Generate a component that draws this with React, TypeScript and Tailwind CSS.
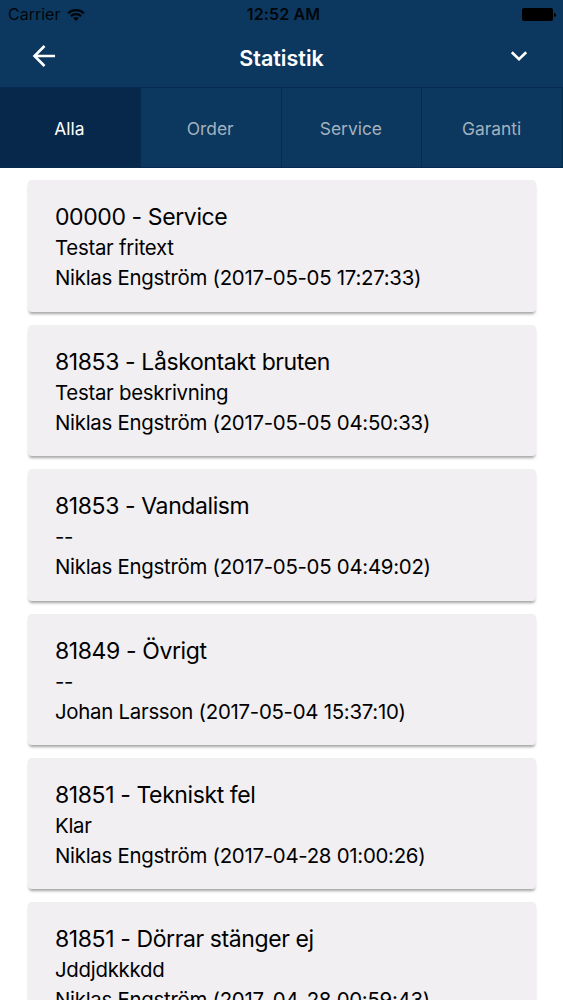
import { useState } from 'react';
import clsx from 'clsx';

interface Report {
  title: string;
  description: string;
  author: string;
}

const tabs = ['Alla', 'Order', 'Service', 'Garanti'];

const reports: Report[] = [
  { title: '00000 - Service', description: 'Testar fritext', author: 'Niklas Engström (2017-05-05 17:27:33)' },
  { title: '81853 - Låskontakt bruten', description: 'Testar beskrivning', author: 'Niklas Engström (2017-05-05 04:50:33)' },
  { title: '81853 - Vandalism', description: '--', author: 'Niklas Engström (2017-05-05 04:49:02)' },
  { title: '81849 - Övrigt', description: '--', author: 'Johan Larsson (2017-05-04 15:37:10)' },
  { title: '81851 - Tekniskt fel', description: 'Klar', author: 'Niklas Engström (2017-04-28 01:00:26)' },
  { title: '81851 - Dörrar stänger ej', description: 'Jddjdkkkdd', author: 'Niklas Engström (2017-04-28 00:59:43)' },
];

function StatusBar() {
  return (
    <div className="grid h-[29px] grid-cols-[1fr_auto_1fr] items-center pl-2 pr-[7px] text-[16px] leading-[29px] text-black/90">
      <div className="flex items-center gap-[7px]">
        <span>Carrier</span>
        <svg className="h-3 w-[18px]" viewBox="0 0 18 12" fill="none" aria-hidden="true">
          <path d="M1 4.3C5.6.1 12.4.1 17 4.3" stroke="currentColor" strokeWidth="2.2" />
          <path d="M3.8 7.1C6.8 4.5 11.2 4.5 14.2 7.1" stroke="currentColor" strokeWidth="2.2" />
          <path d="M9 12 6.2 9.1C7.8 7.7 10.2 7.7 11.8 9.1Z" fill="currentColor" />
        </svg>
      </div>
      <div className="pl-[3px] text-center font-semibold tracking-[0.15px]">12:52 AM</div>
      <div className="flex items-center justify-end gap-px">
        <span className="h-[13px] w-[31px] rounded-[2px] bg-black" />
        <span className="h-1 w-[2px] rounded-r-full bg-black" />
      </div>
    </div>
  );
}

function ReportCard({ report }: { report: Report }) {
  return (
    <div className="h-[131.4px] shrink-0 rounded-[4px] bg-[#f1eff2] px-[27px] pt-[21px] text-black shadow-[0_3px_3px_-1px_rgba(0,0,0,0.36)]">
      <h2 className="whitespace-nowrap text-[23px] leading-8 tracking-[-0.4px]">{report.title}</h2>
      <p className="whitespace-nowrap text-[20.4px] leading-[30px] tracking-[-0.27px]">{report.description}</p>
      <p className="whitespace-nowrap text-[20.4px] leading-[30px] tracking-[-0.27px]">{report.author}</p>
    </div>
  );
}

export default function App() {
  const [activeTab, setActiveTab] = useState('Alla');

  return (
    <div className="flex h-[1000px] w-full flex-col overflow-hidden bg-white font-['Inter',sans-serif]">
      <header className="shrink-0 bg-[#0c375e]">
        <StatusBar />
        <div className="flex h-[58px] items-center justify-between pl-8 pr-[35px] text-white">
          <button type="button" aria-label="Tillbaka" className="-mt-1">
            <svg className="h-6 w-6" viewBox="0 0 24 24" fill="none" stroke="currentColor" strokeWidth="2.6" aria-hidden="true">
              <path d="M12.5 2 2.5 12l10 10M2.5 12H23" />
            </svg>
          </button>
          <h1 className="-ml-[3px] pt-px text-[21.5px] font-semibold">Statistik</h1>
          <button type="button" aria-label="Visa meny" className="-mt-1">
            <svg className="h-[10px] w-[18px]" viewBox="0 0 18 10" fill="none" stroke="currentColor" strokeWidth="2.6" aria-hidden="true">
              <path d="m1.8 1.2 7.2 7 7.2-7" />
            </svg>
          </button>
        </div>
        <nav className="grid h-[81.4px] grid-cols-4 border-y border-[#062b50]">
          {tabs.map((tab) => (
            <button
              key={tab}
              type="button"
              onClick={() => setActiveTab(tab)}
              className={clsx(
                'border-r border-[#062b50] pr-px pt-[2px] text-[17.4px]',
                tab === activeTab ? 'bg-[#08284b] text-white' : 'text-[#a3b2bf]',
              )}
            >
              {tab}
            </button>
          ))}
        </nav>
      </header>

      <main className="flex flex-col gap-[13px] pl-7 pr-[27.5px] pt-3">
        {reports.map((report) => (
          <ReportCard key={report.author} report={report} />
        ))}
      </main>
    </div>
  );
}
